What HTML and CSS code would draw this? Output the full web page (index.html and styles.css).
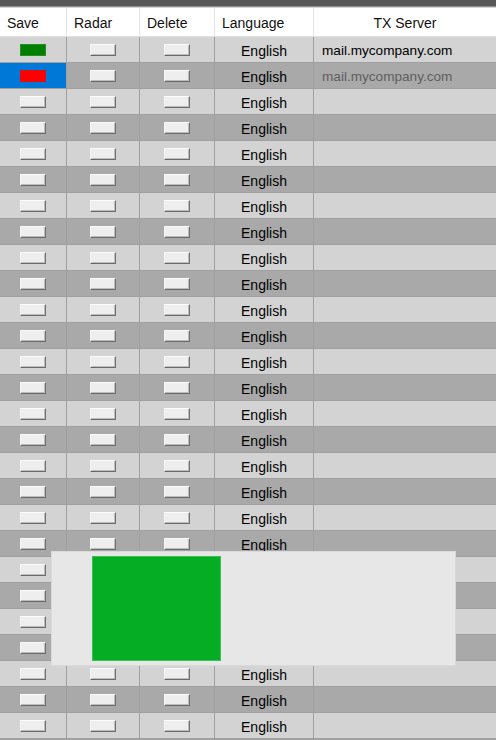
FILE: index.html
```html
<!DOCTYPE html>
<html>
<head>
<meta charset="utf-8">
<link rel="stylesheet" href="styles.css">
</head>
<body>
<div class="topbar"></div>
<div class="grid">
  <div class="head">
    <div class="hc">Save</div>
    <div class="hc">Radar</div>
    <div class="hc">Delete</div>
    <div class="hc">Language</div>
    <div class="hc center last">TX Server</div>
  </div>
  <div class="row light">
    <div class="c"><span class="btn green"></span></div>
    <div class="c"><span class="btn"></span></div>
    <div class="c"><span class="btn"></span></div>
    <div class="c lang">English</div>
    <div class="c tx">mail.mycompany.com</div>
  </div>
  <div class="row dark">
    <div class="c sel"><span class="btn red"></span></div>
    <div class="c"><span class="btn"></span></div>
    <div class="c"><span class="btn"></span></div>
    <div class="c lang">English</div>
    <div class="c tx muted">mail.mycompany.com</div>
  </div>
  <div class="row light"><div class="c"><span class="btn"></span></div><div class="c"><span class="btn"></span></div><div class="c"><span class="btn"></span></div><div class="c lang">English</div><div class="c tx"></div></div>
  <div class="row dark"><div class="c"><span class="btn"></span></div><div class="c"><span class="btn"></span></div><div class="c"><span class="btn"></span></div><div class="c lang">English</div><div class="c tx"></div></div>
  <div class="row light"><div class="c"><span class="btn"></span></div><div class="c"><span class="btn"></span></div><div class="c"><span class="btn"></span></div><div class="c lang">English</div><div class="c tx"></div></div>
  <div class="row dark"><div class="c"><span class="btn"></span></div><div class="c"><span class="btn"></span></div><div class="c"><span class="btn"></span></div><div class="c lang">English</div><div class="c tx"></div></div>
  <div class="row light"><div class="c"><span class="btn"></span></div><div class="c"><span class="btn"></span></div><div class="c"><span class="btn"></span></div><div class="c lang">English</div><div class="c tx"></div></div>
  <div class="row dark"><div class="c"><span class="btn"></span></div><div class="c"><span class="btn"></span></div><div class="c"><span class="btn"></span></div><div class="c lang">English</div><div class="c tx"></div></div>
  <div class="row light"><div class="c"><span class="btn"></span></div><div class="c"><span class="btn"></span></div><div class="c"><span class="btn"></span></div><div class="c lang">English</div><div class="c tx"></div></div>
  <div class="row dark"><div class="c"><span class="btn"></span></div><div class="c"><span class="btn"></span></div><div class="c"><span class="btn"></span></div><div class="c lang">English</div><div class="c tx"></div></div>
  <div class="row light"><div class="c"><span class="btn"></span></div><div class="c"><span class="btn"></span></div><div class="c"><span class="btn"></span></div><div class="c lang">English</div><div class="c tx"></div></div>
  <div class="row dark"><div class="c"><span class="btn"></span></div><div class="c"><span class="btn"></span></div><div class="c"><span class="btn"></span></div><div class="c lang">English</div><div class="c tx"></div></div>
  <div class="row light"><div class="c"><span class="btn"></span></div><div class="c"><span class="btn"></span></div><div class="c"><span class="btn"></span></div><div class="c lang">English</div><div class="c tx"></div></div>
  <div class="row dark"><div class="c"><span class="btn"></span></div><div class="c"><span class="btn"></span></div><div class="c"><span class="btn"></span></div><div class="c lang">English</div><div class="c tx"></div></div>
  <div class="row light"><div class="c"><span class="btn"></span></div><div class="c"><span class="btn"></span></div><div class="c"><span class="btn"></span></div><div class="c lang">English</div><div class="c tx"></div></div>
  <div class="row dark"><div class="c"><span class="btn"></span></div><div class="c"><span class="btn"></span></div><div class="c"><span class="btn"></span></div><div class="c lang">English</div><div class="c tx"></div></div>
  <div class="row light"><div class="c"><span class="btn"></span></div><div class="c"><span class="btn"></span></div><div class="c"><span class="btn"></span></div><div class="c lang">English</div><div class="c tx"></div></div>
  <div class="row dark"><div class="c"><span class="btn"></span></div><div class="c"><span class="btn"></span></div><div class="c"><span class="btn"></span></div><div class="c lang">English</div><div class="c tx"></div></div>
  <div class="row light"><div class="c"><span class="btn"></span></div><div class="c"><span class="btn"></span></div><div class="c"><span class="btn"></span></div><div class="c lang">English</div><div class="c tx"></div></div>
  <div class="row dark"><div class="c"><span class="btn"></span></div><div class="c"><span class="btn"></span></div><div class="c"><span class="btn"></span></div><div class="c lang">English</div><div class="c tx"></div></div>
  <div class="row light"><div class="c"><span class="btn"></span></div><div class="c"><span class="btn"></span></div><div class="c"><span class="btn"></span></div><div class="c lang">English</div><div class="c tx"></div></div>
  <div class="row dark"><div class="c"><span class="btn"></span></div><div class="c"><span class="btn"></span></div><div class="c"><span class="btn"></span></div><div class="c lang">English</div><div class="c tx"></div></div>
  <div class="row light"><div class="c"><span class="btn"></span></div><div class="c"><span class="btn"></span></div><div class="c"><span class="btn"></span></div><div class="c lang">English</div><div class="c tx"></div></div>
  <div class="row dark"><div class="c"><span class="btn"></span></div><div class="c"><span class="btn"></span></div><div class="c"><span class="btn"></span></div><div class="c lang">English</div><div class="c tx"></div></div>
  <div class="row light"><div class="c"><span class="btn"></span></div><div class="c"><span class="btn"></span></div><div class="c"><span class="btn"></span></div><div class="c lang">English</div><div class="c tx"></div></div>
  <div class="row dark"><div class="c"><span class="btn"></span></div><div class="c"><span class="btn"></span></div><div class="c"><span class="btn"></span></div><div class="c lang">English</div><div class="c tx"></div></div>
  <div class="row light"><div class="c"><span class="btn"></span></div><div class="c"><span class="btn"></span></div><div class="c"><span class="btn"></span></div><div class="c lang">English</div><div class="c tx"></div></div>
</div>
<div class="popup">
  <div class="swatch"></div>
</div>
</body>
</html>
```
FILE: styles.css
```css
html, body {
  margin: 0;
  padding: 0;
}
body {
  width: 496px;
  height: 740px;
  overflow: hidden;
  background: #a0a0a0;
  font-family: "Liberation Sans", Arial, sans-serif;
  font-size: 14px;
  color: #000;
}
.topbar {
  height: 6px;
  background: #575757;
  border-bottom: 1px solid #8e8e8e;
  box-shadow: 0 1px 0 #d4d4d4;
  position: relative;
}
.head, .row {
  display: grid;
  grid-template-columns: 67px 73px 75px 99px 182px;
}
.head {
  height: 29px;
  margin-top: 1px;
  background: #fff;
  border-bottom: 1px solid #e0e0e0;
  box-sizing: border-box;
}
.hc {
  box-sizing: border-box;
  border-right: 1px solid #e3e3e3;
  padding: 3px 0 0 7px;
  line-height: 24px;
  color: #111;
  white-space: nowrap;
}
.hc.center {
  text-align: center;
  padding-left: 0;
}
.hc.last {
  border-right: none;
}
.row {
  height: 26px;
}
.light { background: #d3d3d3; }
.dark { background: #a9a9a9; }
.c {
  box-sizing: border-box;
  border-right: 1px solid #a0a0a0;
  border-bottom: 1px solid #a0a0a0;
  display: flex;
  align-items: center;
  justify-content: center;
  padding-top: 1px;
}
.c.tx {
  border-right: none;
  justify-content: flex-start;
  padding-left: 8px;
  font-size: 13.6px;
  padding-top: 2px;
}
.c.lang {
  padding-top: 2px;
}
.muted { color: #5f5f5f; }
.sel { background: #0078d7; }
.btn {
  display: block;
  width: 26px;
  height: 12px;
  box-sizing: border-box;
  background: #eeeeee;
  border: 1px solid;
  border-color: #fbfbfb #707070 #6a6a6a #f4f4f4;
  box-shadow: inset -1px -1px 0 #bdbdbd;
}
.btn.green {
  background: #008000;
  border-color: #2a8a2a;
  box-shadow: none;
}
.btn.red {
  background: #ff0000;
  border-color: #e01010;
  box-shadow: none;
}
.popup {
  position: absolute;
  left: 51px;
  top: 551px;
  width: 405px;
  height: 115px;
  box-sizing: border-box;
  background: #e7e7e7;
  border: 1px solid #dadada;
  padding: 4px 0 0 40px;
}
.swatch {
  width: 129px;
  height: 105px;
  box-sizing: border-box;
  background: #05ad25;
  border: 1px solid #3cbf55;
}
```
